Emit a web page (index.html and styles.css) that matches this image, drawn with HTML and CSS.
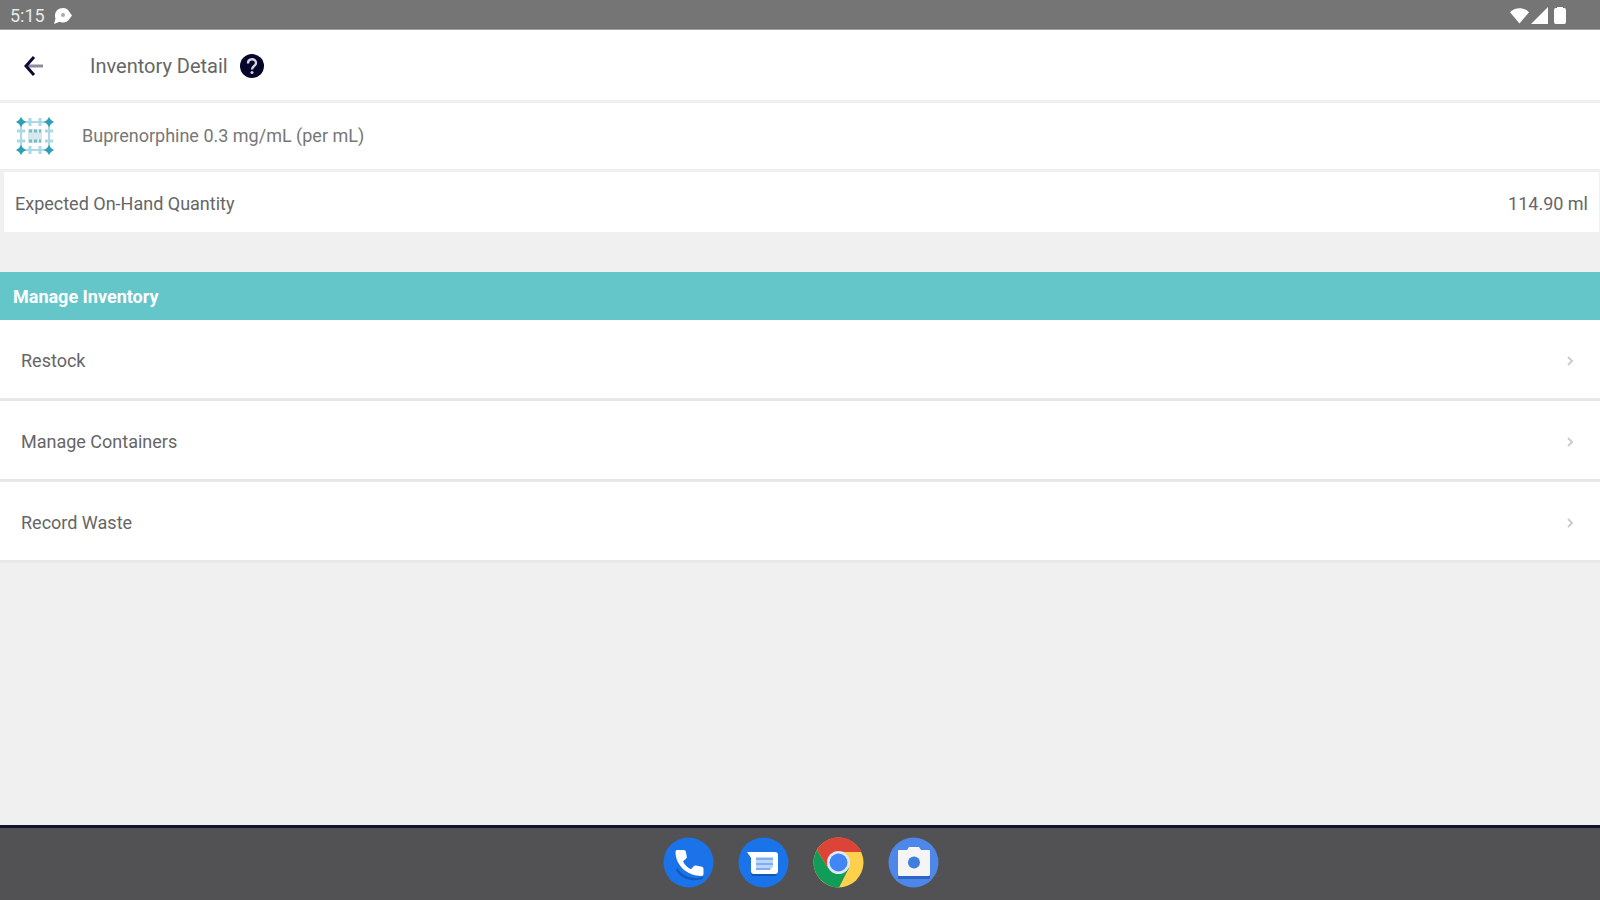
FILE: index.html
```html
<!DOCTYPE html>
<html lang="en">
<head>
    <meta charset="utf-8">
    <title>Inventory Detail</title>
    <link rel="stylesheet" href="styles.css">
</head>
<body>
    <div class="status-bar">
        <span class="clock">5:15</span>
        <svg class="status-icon" width="20" height="18" viewBox="0 0 20 18">
            <path fill="#fff" d="M10 1c3 0 5 1.500 6 3.500l3 4-3 4c-1.300 2-3.300 3-6 3-1.500 0-2.500-.3-3.500-.8L1 17l1.500-5.500C2 10.500 2 9.500 2 8.500 2 4 5.500 1 10 1z"/>
            <circle cx="10" cy="8" r="2" fill="#aaa"/>
        </svg>
        <div class="signals">
            <svg width="19" height="18" viewBox="0 0 20 18"><path fill="#fff" d="M0 5C5-.5 15-.5 20 5L10 17z"/></svg>
            <svg width="17" height="18" viewBox="0 0 17 18"><path fill="#fff" d="M17 0v17H0z"/></svg>
            <svg width="12" height="18" viewBox="0 0 12 18"><path fill="#fff" d="M3 0h6v1h1q2 0 2 2v12q0 2-2 2H2q-2 0-2-2V3q0-2 2-2h1z"/></svg>
        </div>
    </div>

    <header class="header">
        <button class="icon-btn" aria-label="Back">
            <svg width="20" height="20" viewBox="0 0 20 20" fill="none">
                <path stroke="#8c8c9c" stroke-width="3" d="M3 10h16"/>
                <path stroke="#0a0a35" stroke-width="3" d="M10 1L2 10l8 9"/>
            </svg>
        </button>
        <h1>Inventory Detail</h1>
        <button class="icon-btn" aria-label="Help">
            <svg width="24" height="24" viewBox="0 0 24 24" fill="none">
                <circle cx="12" cy="12" r="12" fill="#06062c"/>
                <path stroke="#d5d5e0" stroke-width="2.400" d="M8 9.500C8 4 16 4 16 9c0 3-4 3-4 6.500"/>
                <circle cx="12" cy="18.500" r="1.500" fill="#d5d5e0"/>
            </svg>
        </button>
    </header>

    <main>
        <section class="item">
            <svg width="38" height="38" viewBox="0 0 38 38">
                <g stroke="#a9dae3" stroke-width="2" fill="none">
                    <path d="M8 5h22M8 33h22M5 8v22M33 8v22"/>
                    <path stroke-width="3" d="M14 1v8M24 1v8M14 29v8M24 29v8M1 14h8M1 24h8M29 14h8M29 24h8"/>
                </g>
                <path fill="#d3e9ee" d="M12 12h14v14H12z"/>
                <path stroke="#7db9c6" stroke-width="3" stroke-dasharray="3 2" d="M13 14h12M13 24h12"/>
                <g fill="#2f9fb9">
                    <path d="M5 0l2 3 3 2-3 2-2 3-2-3-3-2 3-2z"/>
                    <path d="M33 0l2 3 3 2-3 2-2 3-2-3-3-2 3-2z"/>
                    <path d="M5 28l2 3 3 2-3 2-2 3-2-3-3-2 3-2z"/>
                    <path d="M33 28l2 3 3 2-3 2-2 3-2-3-3-2 3-2z"/>
                </g>
            </svg>
            <h2>Buprenorphine 0.3 mg/mL (per mL)</h2>
        </section>

        <section class="quantity">
            <span>Expected On-Hand Quantity</span>
            <span>114.90 ml</span>
        </section>

        <h3 class="section-title">Manage Inventory</h3>
        <nav class="menu">
            <button class="menu-row">
                Restock
                <svg width="6" height="10" viewBox="0 0 6 10"><path d="M1 1l4 4-4 4"/></svg>
            </button>
            <button class="menu-row">
                Manage Containers
                <svg width="6" height="10" viewBox="0 0 6 10"><path d="M1 1l4 4-4 4"/></svg>
            </button>
            <button class="menu-row">
                Record Waste
                <svg width="6" height="10" viewBox="0 0 6 10"><path d="M1 1l4 4-4 4"/></svg>
            </button>
        </nav>
    </main>

    <footer class="dock">
        <button class="icon-btn" aria-label="Phone">
            <svg width="51" height="51" viewBox="0 0 51 51">
                <circle cx="25.500" cy="25.500" r="25" fill="#1a73e8"/>
                <path fill="#1059bd" d="M14 31c6 9 17 12 26 9v2c-12 3-22 0-27-9z"/>
                <path fill="#fff" d="M14 13h7q1.500 0 1.800 1.500l1 5q.2 1.300-.8 2.200l-3 2.600c2 4 4 6 8 8l2.700-3q1-1 2.200-.7l6 1.200q1.600.4 1.600 2V37q0 2-2 2C24 39 12.500 28 12.500 15q0-2 1.500-2z"/>
            </svg>
        </button>
        <button class="icon-btn" aria-label="Messages">
            <svg width="51" height="51" viewBox="0 0 51 51">
                <circle cx="25.500" cy="25.500" r="25" fill="#1a73e8"/>
                <path fill="#1257b5" d="M9 15l4 7v14q0 3 3 3h20q3 0 3-3z"/>
                <path fill="#fff" d="M9 15h28q3 0 3 3v16q0 3-3 3H16q-3 0-3-3V21z"/>
                <path fill="#bcd5fb" d="M18 20h17v10l-3 3H18z"/>
                <path stroke="#7faef5" stroke-width="2" d="M18 22h17M18 27h17M18 32h14"/>
            </svg>
        </button>
        <button class="icon-btn" aria-label="Chrome">
            <svg width="51" height="51" viewBox="0 0 51 51">
                <circle cx="25.500" cy="25.500" r="25" fill="#ffd04b"/>
                <path fill="#119d58" d="M4 13A25 25 0 0 0 26 50.500L36 31 15 31z"/>
                <path fill="#db4437" d="M4 13A25 25 0 0 1 48.500 15H26L15 31z"/>
                <circle cx="25.500" cy="25.500" r="11.500" fill="#dfe8f8"/>
                <circle cx="25.500" cy="25.500" r="9" fill="#4285f4"/>
            </svg>
        </button>
        <button class="icon-btn" aria-label="Camera">
            <svg width="51" height="51" viewBox="0 0 51 51">
                <circle cx="25.500" cy="25.500" r="25" fill="#4e87ea"/>
                <path fill="#2e65c8" d="M10 38h32v4H10z"/>
                <path fill="#f5f5f5" d="M11 13h8l2-3h10l2 3h8q1 0 1 1v23q0 2-1 2H11q-1 0-1-2V14q0-1 1-1z"/>
                <circle cx="26" cy="25.500" r="6" fill="#3f7de0"/>
            </svg>
        </button>
    </footer>
</body>
</html>
```

FILE: styles.css
```css
:root {
    --bg-color: #f0f0f0;
    --line-color: #efefef;
    --teal: #64c6c9;
    --text-color: #666;
}

* {
    box-sizing: border-box;
}

body {
    margin: 0;
    min-height: 100vh;
    display: flex;
    flex-direction: column;
    background: var(--bg-color);
    color: var(--text-color);
    font-family: Roboto, "Liberation Sans", sans-serif;
    font-size: 18px;
    line-height: 24px;
}

h1, h2, h3 {
    margin: 0;
    font-size: 18px;
    font-weight: 400;
}

button {
    border: none;
    background: none;
    font: inherit;
    color: inherit;
    cursor: pointer;
}

svg {
    display: block;
    flex: none;
}

.icon-btn {
    padding: 0;
}

.status-bar {
    display: flex;
    align-items: center;
    height: 30px;
    padding: 2px 34px 0 10px;
    background: #757575;
    border-bottom: 1px solid #a0a0a0;
    color: #e8e8e8;
}

.status-icon {
    margin-left: 8px;
}

.signals {
    display: flex;
    gap: 2px;
    margin-left: auto;
}

.signals svg:last-child {
    margin-left: 4px;
}

.header {
    display: flex;
    align-items: center;
    height: 73px;
    padding: 2px 24px 0;
    background: #fff;
    border-bottom: 3px solid var(--line-color);
}

.header h1 {
    margin: 0 12px 0 46px;
    font-size: 20px;
}

.item {
    display: flex;
    align-items: center;
    gap: 28px;
    height: 69px;
    padding: 0 16px;
    background: #fff;
    border-bottom: 3px solid var(--line-color);
}

.item h2 {
    color: #777;
}

.quantity {
    display: flex;
    align-items: center;
    justify-content: space-between;
    height: 60px;
    margin: 0 1px 0 4px;
    padding: 4px 11px 0;
    background: #fff;
}

.section-title {
    margin-top: 40px;
    padding: 13px 13px 11px;
    background: var(--teal);
    color: #fff;
    font-weight: 700;
}

.menu-row {
    display: flex;
    align-items: center;
    justify-content: space-between;
    width: 100%;
    padding: 29px 27px 25px 21px;
    background: #fff;
    border-bottom: 3px solid #e8e8e8;
    text-align: left;
}

.menu-row svg {
    fill: none;
    stroke: #ccc;
    stroke-width: 2;
}

.dock {
    display: flex;
    align-items: flex-start;
    justify-content: center;
    gap: 24px;
    height: 75px;
    margin-top: auto;
    padding: 9px 0 0 1px;
    background: #525254;
    border-top: 3px solid #15152a;
}
```
